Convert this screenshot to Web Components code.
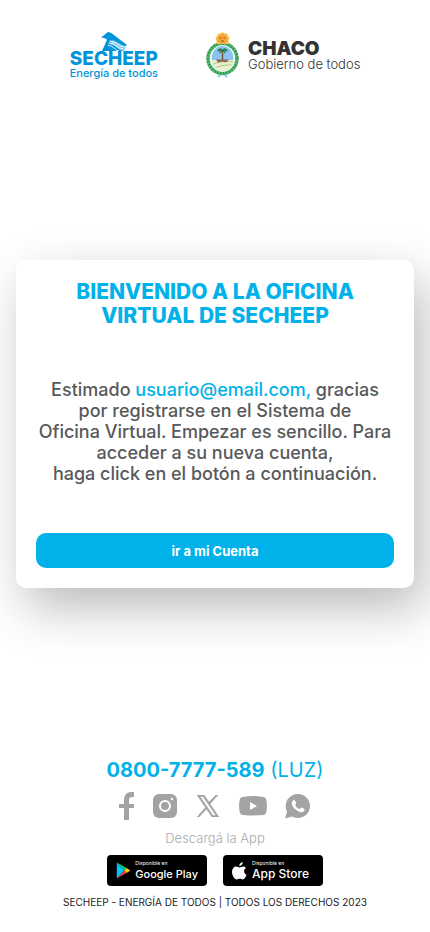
<!DOCTYPE html>
<html lang="es">
<head>
<meta charset="utf-8">
<meta name="viewport" content="width=device-width, initial-scale=1">
<title>Oficina Virtual SECHEEP</title>
<style>
  html { background: #fff; }
  body { margin: 0; font-family: Inter, "Liberation Sans", sans-serif; color: #58595b; }
</style>
</head>
<body>
<welcome-page></welcome-page>

<script>
const define = (name, html) => {
  const template = document.createElement("template");
  template.innerHTML = html;
  customElements.define(name, class extends HTMLElement {
    constructor() {
      super();
      this.attachShadow({ mode: "open" }).append(template.content.cloneNode(true));
    }
  });
};

define("secheep-logo", `
<style>
  :host { display: flex; flex-direction: column; align-items: center; color: #0095da; padding-top: 32px; }
  svg { display: block; width: 28px; height: 19px; }
  .name { font-size: 19px; line-height: 16px; font-weight: 800; }
  .tag { font-size: 11px; line-height: 13px; font-weight: 500; }
</style>
<svg viewBox="0 0 28 19" aria-hidden="true">
  <path d="M1 5.500 8 0q2 0 4 1.500L27 13l-4 2-8-5-8-2q-1-2-6-2.500z" fill="#0095da"/>
  <path d="M7 8l7 .5L26 15l-2.500 4H3z" fill="#7cc8ee"/>
  <path d="M7 8h3l-2 4q5 0 8 3t7 4H2z" fill="#0095da"/>
  <path d="M11 9.500q4 0 6.500 2.500t7 3M10 11.500q4 0 6.500 2.500t7 3M8 13.500q4 0 6 2.500t5 3" fill="none" stroke="#fff" stroke-width=".9"/>
</svg>
<span class="name">SECHEEP</span>
<span class="tag">Energía de todos</span>`);

define("chaco-logo", `
<style>
  :host { display: flex; gap: 9px; padding-top: 32px; color: #333; }
  svg { display: block; width: 33px; height: 46px; flex: none; }
  .words { display: flex; flex-direction: column; padding-top: 8px; }
  .name { font-size: 19px; line-height: 17px; font-weight: 900; }
  .tag { font-size: 13px; line-height: 14px; font-weight: 300; }
</style>
<svg viewBox="0 0 33 46" aria-hidden="true">
  <path d="M10 40c5-1 7 1 11 5M23 40c-5-1-7 1-11 5" fill="none" stroke="#90c9ef" stroke-width="2"/>
  <ellipse cx="16.500" cy="26.500" rx="14.500" ry="15" fill="none" stroke="#5fb978" stroke-width="3.500"/>
  <ellipse cx="16.500" cy="26.500" rx="14.500" ry="15" fill="none" stroke="#2f9c50" stroke-width="3" stroke-dasharray="1.500 1.500"/>
  <clipPath id="shield"><ellipse cx="16.500" cy="26.500" rx="11" ry="13"/></clipPath>
  <g clip-path="url(#shield)">
    <path d="M0 10h33v18H0z" fill="#8ac5f2"/>
    <path d="M0 28h33v14H0z" fill="#e8f0cc"/>
    <path d="M4 34q8-6 24-4M6 38q8-6 22-5" stroke="#a8c783" fill="none"/>
    <path d="M16.500 18v11" stroke="#795832" stroke-width="1.500"/>
    <path d="M16.500 18q-3-3-5 1 3-1 5-1-3 1-3 3 3-2 3-3 0 1 3 3 0-2-3-3 2 0 5 1-2-4-5-1z" fill="#297b48" stroke="#297b48" stroke-width=".8"/>
    <path d="M10 27.500h13l-3 3-4-1-4 1z" fill="#8a6557"/>
  </g>
  <ellipse cx="16.500" cy="26.500" rx="11.500" ry="13" fill="none" stroke="#e5f0e8"/>
  <path d="M16.500 0 18.500 1.500l2.500 0 1 2.500 1.500 2-1 3v3h-12V9L9.500 6l1.500-2 1-2.500h2.500z" fill="#f8c052"/>
  <circle cx="16.500" cy="7" r="5" fill="#f4a63a"/>
  <path d="M13.500 6h2m2 0h2M15 9h3" stroke="#9a5d22" stroke-width="1"/>
</svg>
<div class="words"><span class="name">CHACO</span><span class="tag">Gobierno de todos</span></div>`);

define("site-header", `
<style>
  :host { display: block; }
  header { display: flex; justify-content: center; gap: 48px; height: 80px; }
</style>
<header><slot></slot></header>`);

define("welcome-card", `
<style>
  :host { display: block; padding: 20px; border-radius: 10px; background: #fff;
    box-shadow: 10px 20px 50px rgba(0, 0, 0, .27); text-align: center; }
  h1 { margin: 0; color: #00b2e9; font-size: 21px; line-height: 24px; font-weight: 800; }
  p { margin: 51px 0 49px; font-size: 18px; line-height: 21px; font-weight: 500; }
  ::slotted(b) { color: #00b2e9; font-weight: 500; }
</style>
<h1><slot name="title"></slot></h1>
<p><slot></slot></p>
<slot name="action"></slot>`);

define("action-button", `
<style>
  :host { display: block; }
  button { display: block; width: 100%; height: 35px; border: 0; border-radius: 10px; background: #00b2e9;
    color: #fff; font: 700 13px/20px Inter, "Liberation Sans", sans-serif; cursor: pointer; }
</style>
<button type="button"><slot></slot></button>`);

define("social-links", `
<style>
  :host { display: flex; justify-content: center; align-items: center; gap: 18px; height: 28px; }
  a { display: block; color: #a3a3a3; }
  svg { display: block; fill: currentColor; }
</style>
<a href="#facebook" aria-label="Facebook"><svg width="16" height="28" viewBox="0 0 16 28"><path d="M5 28V16H0v-4h5V8c0-5 3-8 7-8h3v5h-2c-2 0-3 1-3 3v4h5v4h-5v12z"/></svg></a>
<a href="#instagram" aria-label="Instagram"><svg width="24" height="24" viewBox="0 0 24 24"><rect width="24" height="24" rx="6"/><circle cx="12" cy="12" r="5" fill="none" stroke="#fff" stroke-width="2"/><circle cx="19" cy="5" r="1.200" fill="#fff"/></svg></a>
<a href="#x" aria-label="X"><svg width="26" height="22" viewBox="-1 0 26 22"><path fill-rule="evenodd" d="M1 0h7l5 7 7-7h2l-8 9 9 13h-7l-5.500-8L3 22H1l8.500-9.500zm3 1.500L17 20.500h3L7 1.500z" stroke="currentColor" stroke-width=".5"/></svg></a>
<a href="#youtube" aria-label="YouTube"><svg width="28" height="20" viewBox="0 0 28 20"><path fill-rule="evenodd" d="M4 1q10-2 20 0 3 0 3.500 4 .8 5 0 10-.5 4-3.500 4-10 1-20 0-3 0-3.500-4-.8-5 0-10Q1 1 4 1zm7 5v8l7-4z"/></svg></a>
<a href="#whatsapp" aria-label="WhatsApp"><svg width="26" height="26" viewBox="0 0 26 26"><path d="M13 1a12 12 0 1 1-6 22.400L0 25.500l2-7A12 12 0 0 1 13 1z"/><path fill="#fff" d="M8 7.500c.6-.7 1.700-.7 2 0l1.200 2.700c.2.600-.9 1.600-.9 2 .8 1.700 2.200 3 4.200 3.900.5 0 1.500-1.700 2.100-1.500l2.800 1.400c.5.300 0 1.900-.8 2.500-1.300 1-3.400.8-5.500-.3-3.100-1.600-5.400-4.200-6.200-6.700-.4-1.600.2-3.100 1.100-4z"/></svg></a>`);

define("store-badge", `
<style>
  :host { display: block; text-align: left; }
  a { display: flex; align-items: center; gap: 5px; box-sizing: border-box; height: 31px; padding: 0 9px;
    border-radius: 4px; background: #000; color: #fff; text-decoration: none; }
  .words { display: flex; flex-direction: column; }
  .over { font-size: 5px; line-height: 7px; }
  .name { font-size: var(--name-size, 12px); line-height: 14px; font-weight: 500; white-space: nowrap; }
</style>
<a href="#store"><slot name="icon"></slot><span class="words"><span class="over">Disponible en</span><span class="name"><slot></slot></span></span></a>`);

define("site-footer", `
<style>
  :host { display: block; padding-bottom: 23px; text-align: center; }
  .phone { display: block; color: #00b2e9; font-size: 20px; line-height: 24px; text-decoration: none; }
  .phone strong { font-weight: 700; }
  social-links { margin-top: 10px; }
  .download { margin: 10px 0 0; color: #aaa; font-size: 13px; line-height: 16px; font-weight: 300; }
  .stores { display: flex; justify-content: center; gap: 16px; margin-top: 9px; }
  store-badge { width: 100px; }
  .play { --name-size: 11px; }
  .legal { margin: 9px 0 0; color: #1c1c1c; font-size: 10px; line-height: 14px; }
</style>
<footer>
  <a class="phone" href="tel:08007777589"><strong>0800-7777-589</strong> (LUZ)</a>
  <social-links></social-links>
  <p class="download">Descargá la App</p>
  <div class="stores">
    <store-badge class="play">
      <svg slot="icon" width="17" height="19" viewBox="0 0 17 19" aria-hidden="true">
        <path d="M1 0v19l9-9.500z" fill="#00c3ff"/><path d="M1 0l11.500 6.500L10 9.500z" fill="#00d27a"/>
        <path d="M1 19l11.500-6.500L10 9.500z" fill="#f4384b"/><path d="M12.500 6.500 17 9.500l-4.500 3-2.500-3z" fill="#ffce00"/>
      </svg>Google Play
    </store-badge>
    <store-badge>
      <svg slot="icon" width="15" height="18" viewBox="0 0 15 18" fill="#fff" aria-hidden="true">
        <path d="M10.700 0c.2 2-1.500 4-3.400 4C7 2.200 8.900.2 10.700 0z"/>
        <path d="M14 6.100c-3 1.900-2.200 5.600.6 6.700-.8 2.200-2.300 4.700-4 4.700-1.100 0-1.500-.7-2.900-.7s-1.800.7-2.900.7C2.400 17.500 0 13.300 0 9.800c0-3.200 2-5.200 4.200-5.200 1.400 0 2.300.8 3.500.8 1 0 2.100-.9 3.800-.9 1 0 2 .6 2.500 1.600z"/>
      </svg>App Store
    </store-badge>
  </div>
  <p class="legal">SECHEEP - ENERGÍA DE TODOS | TODOS LOS DERECHOS 2023</p>
</footer>`);

define("welcome-page", `
<style>
  :host { display: flex; flex-direction: column; justify-content: space-between; min-height: 100vh; }
  main { padding: 10px 16px 0; }
</style>
<site-header><secheep-logo></secheep-logo><chaco-logo></chaco-logo></site-header>
<main>
  <welcome-card>
    <span slot="title">BIENVENIDO A LA OFICINA<br>VIRTUAL DE SECHEEP</span>
    Estimado <b>usuario@email.com,</b> gracias<br>por registrarse en el Sistema de<br>Oficina Virtual. Empezar es sencillo. Para<br>acceder a su nueva cuenta,<br>haga click en el botón a continuación.
    <action-button slot="action">ir a mi Cuenta</action-button>
  </welcome-card>
</main>
<site-footer></site-footer>`);
</script>
</body>
</html>
